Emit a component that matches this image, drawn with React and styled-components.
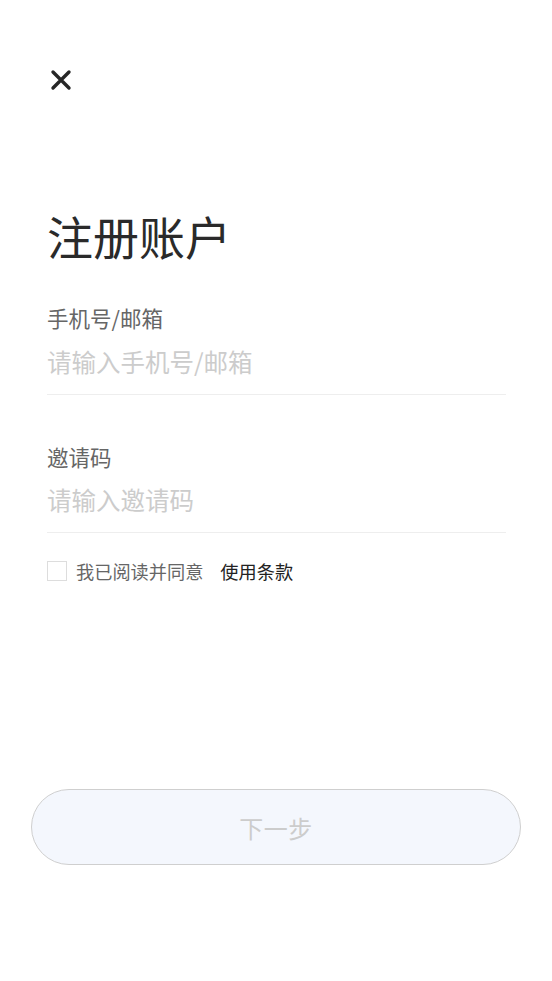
import React, { useState } from 'react'
import styled, { createGlobalStyle } from 'styled-components'

const GlobalStyle = createGlobalStyle`
  html, body {
    margin: 0;
    padding: 0;
    background: #fff;
  }
  body {
    font-family: "Noto Sans CJK SC", "Noto Sans", sans-serif;
    -webkit-font-smoothing: antialiased;
  }
  * { box-sizing: border-box; }
`

const Page = styled.div`
  width: 552px;
  min-height: 981px;
  display: flex;
  flex-direction: column;
  background: #fff;
`

const Content = styled.div`
  padding: 0 46px 0 47px;
  display: flex;
  flex-direction: column;
`

const CloseButton = styled.button`
  margin-top: 69px;
  margin-left: 3px;
  width: 22px;
  height: 22px;
  padding: 0;
  border: none;
  background: none;
  display: flex;
  cursor: pointer;
`

const Title = styled.h1`
  margin: 121px 0 0;
  font-size: 46px;
  line-height: 1;
  font-weight: 400;
  color: #2a2a2a;
`

const Field = styled.div`
  display: flex;
  flex-direction: column;
  margin-top: ${p => p.$top}px;
`

const Label = styled.label`
  font-size: 21.5px;
  line-height: 1;
  color: #666;
`

const Input = styled.input`
  margin-top: 21px;
  height: 45px;
  padding: 0 0 21px;
  border: none;
  border-bottom: 1px solid #eeeeee;
  outline: none;
  font-family: inherit;
  font-size: 24.5px;
  line-height: 24px;
  color: #333;
  background: transparent;

  &::placeholder {
    color: #cccccc;
  }
`

const AgreeRow = styled.div`
  margin-top: 28px;
  display: flex;
  align-items: center;
  height: 20px;
`

const Box = styled.span`
  width: 20px;
  height: 20px;
  border: 1px solid #dddddd;
  background: ${p => (p.$checked ? '#f4f7fd' : '#fff')};
  cursor: pointer;
`

const AgreeText = styled.span`
  margin-left: 9px;
  font-size: 18.2px;
  line-height: 1;
  color: #666;
`

const Terms = styled.a`
  margin-left: 17px;
  font-size: 18.2px;
  line-height: 1;
  font-weight: 400;
  color: #222;
  text-decoration: none;
`

const NextButton = styled.button`
  margin: 208px 31px 0;
  height: 76px;
  border-radius: 38px;
  border: 1.5px solid #cfcfcf;
  background: #f4f7fd;
  font-family: inherit;
  font-size: 24px;
  color: #cccccc;
  letter-spacing: 0.5px;
`

function CloseIcon() {
  return (
    <svg width="22" height="22" viewBox="0 0 22 22">
      <path
        d="M3 3 L19 19 M19 3 L3 19"
        stroke="#262626"
        strokeWidth="3.4"
        strokeLinecap="round"
        fill="none"
      />
    </svg>
  )
}

export default function App() {
  const [account, setAccount] = useState('')
  const [invite, setInvite] = useState('')
  const [agreed, setAgreed] = useState(false)

  return (
    <Page>
      <GlobalStyle />
      <Content>
        <CloseButton aria-label="关闭">
          <CloseIcon />
        </CloseButton>
        <Title>注册账户</Title>
        <Field $top={49}>
          <Label>手机号/邮箱</Label>
          <Input
            placeholder="请输入手机号/邮箱"
            value={account}
            onChange={e => setAccount(e.target.value)}
          />
        </Field>
        <Field $top={51}>
          <Label>邀请码</Label>
          <Input
            placeholder="请输入邀请码"
            value={invite}
            onChange={e => setInvite(e.target.value)}
          />
        </Field>
        <AgreeRow>
          <Box $checked={agreed} onClick={() => setAgreed(!agreed)} />
          <AgreeText>我已阅读并同意</AgreeText>
          <Terms href="#">使用条款</Terms>
        </AgreeRow>
      </Content>
      <NextButton disabled={!agreed || !account}>下一步</NextButton>
    </Page>
  )
}
